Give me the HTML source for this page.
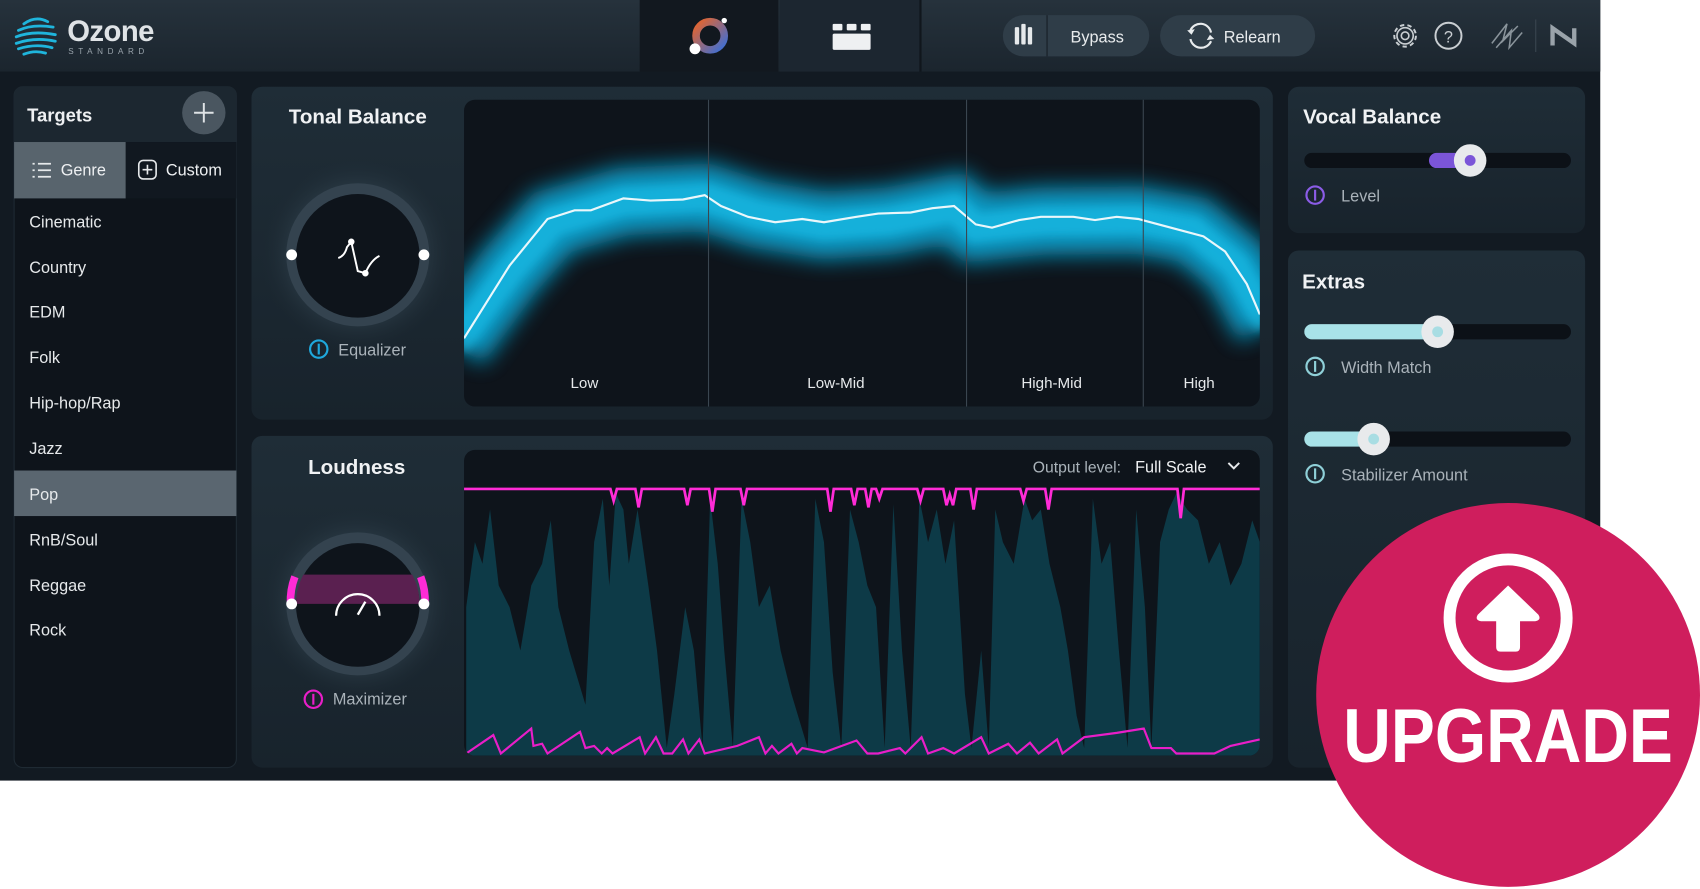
<!DOCTYPE html>
<html><head><meta charset="utf-8"><style>
html,body{margin:0;padding:0;background:#fff;width:1700px;height:889px;overflow:hidden}
svg{display:block}
text{font-family:"Liberation Sans",sans-serif}
</style></head><body>
<svg width="1700" height="889" viewBox="0 0 1568 820" preserveAspectRatio="none" xmlns="http://www.w3.org/2000/svg">
<defs>
<linearGradient id="top" x1="0" y1="0" x2="0" y2="1"><stop offset="0" stop-color="#26323c"/><stop offset="1" stop-color="#1b252e"/></linearGradient>
<linearGradient id="pan" x1="0" y1="0" x2="0" y2="1"><stop offset="0" stop-color="#1f2d37"/><stop offset="1" stop-color="#18232c"/></linearGradient>
<radialGradient id="glow" cx="0.5" cy="0.5" r="0.5"><stop offset="0.6" stop-color="#3a4d5a" stop-opacity="0.6"/><stop offset="1" stop-color="#1d2a33" stop-opacity="0"/></radialGradient>
<filter id="blur" x="-10%" y="-50%" width="120%" height="200%"><feGaussianBlur stdDeviation="10"/></filter>
<filter id="blur2" x="-10%" y="-50%" width="120%" height="200%"><feGaussianBlur stdDeviation="4"/></filter>
<linearGradient id="orb" x1="0" y1="0" x2="1" y2="1"><stop offset="0" stop-color="#e8642a"/><stop offset="1" stop-color="#3a6fd8"/></linearGradient>
<clipPath id="gclip"><rect x="428" y="92" width="734" height="283" rx="10"/></clipPath>
<clipPath id="lclip"><rect x="428" y="415" width="734" height="282" rx="10"/></clipPath>
<clipPath id="kclip"><circle cx="330" cy="557" r="57"/></clipPath>
</defs>
<rect x="0" y="0" width="1476" height="720" fill="#121a22"/>
<rect x="0" y="0" width="1476" height="66" fill="url(#top)"/>
<rect x="590" y="0" width="128" height="66" fill="#12181f"/>
<rect x="719" y="0" width="129" height="66" fill="#1c2630"/>
<rect x="848" y="0" width="2" height="66" fill="#10161c"/>
<g fill="none" stroke="#1fb5dc" stroke-width="2.6" stroke-linecap="round">
<path d="M22 22 Q33 14 44 20"/><path d="M17 28 Q30 22 49 25"/><path d="M15 34 Q30 28 51 32"/><path d="M15 40 Q32 34 51 38"/><path d="M17 45 Q33 40 48 44"/><path d="M22 50 Q32 46 42 49"/>
</g>
<text x="62" y="38" font-size="27" font-weight="bold" fill="#dfe3e6" letter-spacing="-0.5">Ozone</text>
<text x="63" y="50" font-size="7.5" fill="#9aa4ac" letter-spacing="4.2">STANDARD</text>
<circle cx="655" cy="33" r="13" fill="none" stroke="url(#orb)" stroke-width="7"/>
<circle cx="641" cy="45" r="5" fill="#fff"/><circle cx="668" cy="19" r="2.5" fill="#fff"/>
<g fill="#eef0f2"><rect x="768" y="22" width="9" height="6" rx="1"/><rect x="781" y="22" width="9" height="6" rx="1"/><rect x="794" y="22" width="9" height="6" rx="1"/><rect x="768" y="31" width="35" height="15" rx="1.5"/></g>
<rect x="925" y="14" width="135" height="38" rx="19" fill="#2f3d48"/>
<rect x="965" y="14" width="1.5" height="38" fill="#1e2830"/>
<g fill="#e6e9eb"><rect x="936" y="25" width="4" height="16" rx="1"/><rect x="942" y="22" width="4" height="19" rx="1"/><rect x="948" y="25" width="4" height="16" rx="1"/></g>
<text x="1012" y="39" font-size="15" fill="#e8ebed" text-anchor="middle">Bypass</text>
<rect x="1070" y="14" width="143" height="38" rx="19" fill="#2f3d48"/>
<path d="M1098 28 A10 10 0 0 1 1117 30 M1117 38 A10 10 0 0 1 1098 36" fill="none" stroke="#e8ebed" stroke-width="2"/>
<path d="M1095 28 l4 4 l3 -5z M1120 36 l-4 -4 l-3 5z" fill="#e8ebed"/>
<text x="1155" y="39" font-size="15" fill="#e8ebed" text-anchor="middle">Relearn</text>
<circle cx="1296" cy="33" r="10" fill="none" stroke="#c9ced2" stroke-width="1.8" stroke-dasharray="4 3"/>
<circle cx="1296" cy="33" r="7.5" fill="none" stroke="#c9ced2" stroke-width="1.5"/>
<circle cx="1296" cy="33" r="3.5" fill="none" stroke="#c9ced2" stroke-width="1.5"/>
<circle cx="1336" cy="33" r="12" fill="none" stroke="#c9ced2" stroke-width="1.8"/>
<text x="1336" y="39" font-size="15" fill="#c9ced2" text-anchor="middle">?</text>
<path d="M1376 40 L1390 22 L1386 38 L1400 24 M1380 44 L1394 28 L1392 44 L1404 30" fill="none" stroke="#8a949b" stroke-width="1.4"/>
<rect x="1416" y="18" width="1" height="30" fill="#3a4650"/>
<path d="M1432 42 V26 L1452 40 V26" fill="none" stroke="#9aa3aa" stroke-width="4"/>
<rect x="13" y="80" width="205" height="628" rx="8" fill="#0e141b" stroke="#1f2a33"/>
<path d="M13 131 V88 a8 8 0 0 1 8 -8 H210 a8 8 0 0 1 8 8 V131 Z" fill="#1c2730"/>
<text x="25" y="112" font-size="17" font-weight="bold" fill="#eef0f2">Targets</text>
<circle cx="188" cy="104" r="20" fill="#4a5660"/>
<path d="M179 104 H197 M188 95 V113" stroke="#dfe3e6" stroke-width="1.8"/>
<rect x="13" y="131" width="103" height="52" fill="#58646d"/>
<rect x="116" y="131" width="102" height="52" fill="#111820"/>
<g stroke="#e6e9eb" stroke-width="1.6"><path d="M35 151 H47 M35 157 H47 M35 163 H47"/><path d="M30 151 h2 M30 157 h2 M30 163 h2"/></g>
<text x="56" y="162" font-size="15" fill="#eef0f2">Genre</text>
<rect x="128" y="148" width="16" height="17" rx="4" fill="none" stroke="#e6e9eb" stroke-width="1.5"/>
<path d="M136 152 V161 M131.5 156.5 H140.5" stroke="#e6e9eb" stroke-width="1.5"/>
<text x="153" y="162" font-size="15" fill="#eef0f2">Custom</text>
<rect x="13" y="434" width="205" height="42" fill="#5a6670"/>
<g font-size="15" fill="#e6e9eb">
<text x="27" y="210">Cinematic</text><text x="27" y="252">Country</text><text x="27" y="293">EDM</text><text x="27" y="335">Folk</text><text x="27" y="377">Hip-hop/Rap</text><text x="27" y="419">Jazz</text><text x="27" y="461">Pop</text><text x="27" y="503">RnB/Soul</text><text x="27" y="545">Reggae</text><text x="27" y="586">Rock</text>
</g>
<rect x="232" y="80" width="942" height="307" rx="10" fill="url(#pan)"/>
<text x="330" y="114" font-size="19" font-weight="bold" fill="#f0f2f4" text-anchor="middle">Tonal Balance</text>
<circle cx="330" cy="235" r="90" fill="url(#glow)"/>
<circle cx="330" cy="235" r="66" fill="#34434f"/>
<circle cx="330" cy="236" r="57" fill="#0e141b"/>
<circle cx="269" cy="235" r="5" fill="#fff"/><circle cx="391" cy="235" r="5" fill="#fff"/>
<path d="M312 238 Q318 236 320 228 L324 223 L330 250 L337 252 Q342 240 350 236" fill="none" stroke="#fff" stroke-width="1.8"/>
<circle cx="324" cy="223" r="3" fill="#fff"/><circle cx="337" cy="252" r="3" fill="#fff"/>
<circle cx="294" cy="322" r="8" fill="none" stroke="#1fa8dc" stroke-width="2"/><path d="M294 317 V327" stroke="#1fa8dc" stroke-width="2"/>
<text x="312" y="328" font-size="15" fill="#aab3ba">Equalizer</text>
<rect x="428" y="92" width="734" height="283" rx="10" fill="#0e141b"/>
<g clip-path="url(#gclip)">
<path d="M420 318 L470 250 L510 205 L575 186 L650 182 L700 198 L760 208 L820 204 L880 192 L900 210 L960 204 L1050 203 L1100 212 L1140 245 L1170 300" fill="none" stroke="#0ea7d6" stroke-width="62" filter="url(#blur)" opacity="0.9"/>
<path d="M420 318 L470 250 L510 205 L575 186 L650 182 L700 198 L760 208 L820 204 L880 192 L900 210 L960 204 L1050 203 L1100 212 L1140 245 L1170 300" fill="none" stroke="#1cc4ee" stroke-width="26" filter="url(#blur2)" opacity="0.55"/>
<path d="M428 312 L470 245 L505 202 L530 194 L545 194 L575 183 L600 185 L630 184 L650 180 L665 190 L690 200 L715 205 L740 202 L760 205 L790 200 L810 197 L840 196 L860 192 L880 190 L900 207 L915 210 L940 203 L960 200 L990 200 L1010 203 L1030 200 L1050 202 L1080 210 L1110 218 L1130 232 L1150 262 L1162 290" fill="none" stroke="#eaf7fb" stroke-width="2"/>
</g>
<g fill="#3a4650"><rect x="653" y="92" width="1" height="283"/><rect x="891" y="92" width="1" height="283"/><rect x="1054" y="92" width="1" height="283"/></g>
<g font-size="14" fill="#e6e9eb" text-anchor="middle"><text x="539" y="358">Low</text><text x="771" y="358">Low-Mid</text><text x="970" y="358">High-Mid</text><text x="1106" y="358">High</text></g>
<rect x="232" y="402" width="942" height="306" rx="10" fill="url(#pan)"/>
<text x="329" y="437" font-size="19" font-weight="bold" fill="#f0f2f4" text-anchor="middle">Loudness</text>
<circle cx="330" cy="557" r="90" fill="url(#glow)"/>
<circle cx="330" cy="557" r="66" fill="#34434f"/>
<circle cx="330" cy="558" r="57" fill="#0e141b"/>
<rect x="270" y="530" width="120" height="27" fill="#5a2050" clip-path="url(#kclip)"/>
<path d="M268 557 A62 62 0 0 1 272 532" fill="none" stroke="#ff2bd6" stroke-width="7"/>
<path d="M392 557 A62 62 0 0 0 388 532" fill="none" stroke="#ff2bd6" stroke-width="7"/>
<circle cx="269" cy="557" r="5" fill="#fff"/><circle cx="391" cy="557" r="5" fill="#fff"/>
<path d="M310 568 A20 20 0 0 1 350 568" fill="none" stroke="#fff" stroke-width="2"/>
<path d="M330 567 L337 555" stroke="#fff" stroke-width="2.2"/>
<circle cx="289" cy="645" r="8" fill="none" stroke="#e81ec8" stroke-width="2"/><path d="M289 640 V650" stroke="#e81ec8" stroke-width="2"/>
<text x="307" y="650" font-size="15" fill="#aab3ba">Maximizer</text>
<rect x="428" y="415" width="734" height="282" rx="10" fill="#0e141b"/>
<g clip-path="url(#lclip)">
<path fill="#0d3a47" d="M430 697 L430 560 438 500 445 520 452 470 460 540 470 560 480 600 490 540 500 520 508 480 515 560 525 600 540 650 548 500 556 460 562 540 568 455 575 470 580 520 588 470 598 540 606 600 615 690 622 640 632 560 640 600 648 690 655 460 662 520 668 600 676 690 684 460 692 500 700 560 710 540 720 600 730 640 745 690 752 460 760 500 768 620 776 690 784 470 792 500 800 540 808 560 816 690 824 465 832 600 840 690 848 460 856 500 864 470 872 520 880 480 890 640 896 690 905 600 912 690 918 470 925 500 935 520 945 460 952 480 960 470 968 520 978 560 985 600 993 660 1000 690 1008 460 1016 520 1024 500 1032 600 1040 690 1048 470 1056 560 1062 690 1070 500 1078 470 1085 455 1095 470 1105 480 1115 520 1125 500 1135 540 1145 520 1155 480 1162 500 1162 697 Z"/>
<path d="M428 451 H563 L566 462 L569 451 H586 L589 468 L592 451 H631 L634 466 L637 451 H654 L657 472 L660 451 H683 L686 466 L689 451 H763 L766 472 L769 451 H785 L788 466 L791 451 H798 L801 468 L804 451 H808 L811 460 L814 451 H846 L849 462 L852 451 H870 L873 466 L876 456 L879 466 L882 451 H895 L898 470 L901 451 H941 L944 462 L947 451 H964 L967 470 L970 451 H1086 L1089 478 L1092 451 H1162" fill="none" stroke="#ff2bd6" stroke-width="2.5"/>
<path d="M430 695 L455 678 L462 695 L490 672 L492 688 L500 686 L505 695 L535 675 L540 690 L548 688 L555 695 L560 690 L565 695 L590 680 L595 695 L605 680 L612 695 L620 695 L630 682 L635 695 L645 682 L650 695 L680 688 L700 680 L706 695 L712 688 L718 695 L730 686 L735 695 L740 690 L760 694 L790 683 L800 695 L810 695 L830 690 L835 695 L850 680 L856 695 L870 690 L880 695 L905 680 L912 695 L930 686 L938 695 L950 685 L958 695 L975 682 L980 695 L1000 680 L1030 676 L1055 672 L1062 690 L1080 690 L1085 695 L1120 695 L1135 688 L1162 682" fill="none" stroke="#e81ec8" stroke-width="2"/>
</g>
<text x="1034" y="436" font-size="14.5" fill="#aab3ba" text-anchor="end">Output level:</text>
<text x="1047" y="436" font-size="15" fill="#f0f2f4">Full Scale</text>
<path d="M1133 427 L1138 432 L1143 427" fill="none" stroke="#e6e9eb" stroke-width="1.8"/>
<rect x="1188" y="80" width="274" height="135" rx="10" fill="url(#pan)"/>
<text x="1202" y="114" font-size="19" font-weight="bold" fill="#f0f2f4">Vocal Balance</text>
<rect x="1203" y="141" width="246" height="14" rx="7" fill="#0c1117"/>
<rect x="1318" y="141" width="40" height="14" rx="7" fill="#7b55d8"/>
<circle cx="1356" cy="148" r="15" fill="#e8eaec"/><circle cx="1356" cy="148" r="5" fill="#7b55d8"/>
<circle cx="1213" cy="180" r="8" fill="none" stroke="#8b5ce6" stroke-width="2"/><path d="M1213 175 V185" stroke="#8b5ce6" stroke-width="2"/>
<text x="1237" y="186" font-size="15" fill="#aab3ba">Level</text>
<rect x="1188" y="231" width="274" height="477" rx="10" fill="url(#pan)"/>
<text x="1201" y="266" font-size="19" font-weight="bold" fill="#f0f2f4">Extras</text>
<rect x="1203" y="299" width="246" height="14" rx="7" fill="#0c1117"/>
<rect x="1203" y="299" width="125" height="14" rx="7" fill="#a8e2e8"/>
<circle cx="1326" cy="306" r="15" fill="#e8eaec"/><circle cx="1326" cy="306" r="5" fill="#a8dde3"/>
<circle cx="1213" cy="338" r="8" fill="none" stroke="#8fd0d8" stroke-width="2"/><path d="M1213 333 V343" stroke="#8fd0d8" stroke-width="2"/>
<text x="1237" y="344" font-size="15" fill="#aab3ba">Width Match</text>
<rect x="1203" y="398" width="246" height="14" rx="7" fill="#0c1117"/>
<rect x="1203" y="398" width="66" height="14" rx="7" fill="#a8e2e8"/>
<circle cx="1267" cy="405" r="15" fill="#e8eaec"/><circle cx="1267" cy="405" r="5" fill="#a8dde3"/>
<circle cx="1213" cy="437" r="8" fill="none" stroke="#8fd0d8" stroke-width="2"/><path d="M1213 432 V442" stroke="#8fd0d8" stroke-width="2"/>
<text x="1237" y="443" font-size="15" fill="#aab3ba">Stabilizer Amount</text>
<circle cx="1391" cy="641" r="177" fill="#cf1e5d"/>
<circle cx="1391" cy="570" r="54" fill="none" stroke="#fff" stroke-width="11"/>
<path d="M1391 540 L1363 567 Q1360 572 1366 573 L1380 573 L1380 597 Q1380 601 1384 601 L1398 601 Q1402 601 1402 597 L1402 573 L1416 573 Q1422 572 1419 567 Z" fill="#fff"/>
<text x="1391" y="703" font-size="70" font-weight="bold" fill="#fff" text-anchor="middle" textLength="304" lengthAdjust="spacingAndGlyphs">UPGRADE</text>
</svg>
</body></html>
